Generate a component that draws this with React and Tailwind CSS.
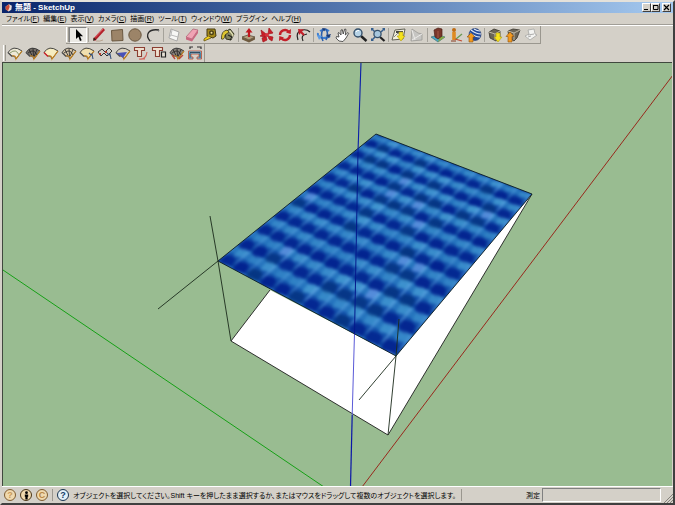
import React, { useState } from 'react';

const Icon = ({ children, size = 'size-4' }) => (
  <svg viewBox="0 0 16 16" className={`${size} shrink-0`} fill="none" aria-hidden="true">
    {children}
  </svg>
);

/* ---------- main toolbar icons ---------- */

const SelectIcon = () => (
  <Icon><path d="M6 2v10l2.4-2.2L10 14l1.7-.8L10 9.2h3z" fill="#000" /></Icon>
);
const PencilIcon = () => (
  <Icon>
    <path d="M3 13 13 2" stroke="#b3202a" strokeWidth="2.8" />
    <path d="M4.2 10.4 12 2" stroke="#e8747a" strokeWidth=".8" />
    <path d="m2 14 .8-3.4 2.4 2z" fill="#332418" />
    <path d="M5 14q4 .6 7-1" stroke="#b9a38f" />
  </Icon>
);
const RectIcon = () => (
  <Icon><path d="m2.5 3.5 11-1 .5 11-11 .5z" fill="#9c8468" stroke="#6b5840" /></Icon>
);
const CircleIcon = () => (
  <Icon><circle cx="8" cy="8" r="6.2" fill="#9c8468" stroke="#6b5840" /></Icon>
);
const ArcIcon = () => (
  <Icon>
    <path d="M5 14C0 8 3 1.500 14 3" stroke="#2b2b2b" strokeWidth="1.300" />
    <path d="m5 14 1.500-.5M14 3l-.5 1.500" stroke="#777" />
  </Icon>
);
const ComponentIcon = () => (
  <Icon>
    <path d="m5 2 8 3-2 9-8-3z" fill="#f7f7f5" stroke="#999" strokeWidth=".8" />
    <path d="m3 11 2-3 7 2M5 8l1-5" stroke="#bbb" />
  </Icon>
);
const EraserIcon = () => (
  <Icon>
    <path d="m2 10 7-8 5 1-6 9z" fill="#f0a3b4" stroke="#a95f70" strokeWidth=".7" />
    <path d="m2 10 6 2v2.500l-6-2zM8 12l6-9v3l-6 8.500z" fill="#c9667f" />
  </Icon>
);
const TapeIcon = () => (
  <Icon>
    <path d="M5 2h8l1 7-3 2-6-2z" fill="#a58b1c" stroke="#463a10" />
    <circle cx="9.500" cy="5.800" r="2.500" fill="#4e4216" />
    <circle cx="9.500" cy="5.800" r="1" fill="#efe196" />
    <path d="m6 9-4 3v2l7-3" fill="#f0d01c" stroke="#63530f" strokeWidth=".8" />
  </Icon>
);
const PaintIcon = () => (
  <Icon>
    <path d="m5 5 5-3 4 5-3 6-5-1z" fill="#83845e" stroke="#33331f" />
    <path d="m7 5 3-1 3 4-2 4" stroke="#e3e0b4" strokeWidth="1.300" />
    <path d="M7 3Q1 4 1.500 12q3 1 3.500-4l4-3z" fill="#dfc730" stroke="#3b3618" strokeWidth=".8" />
    <path d="m8 8 4 2-2 3" stroke="#222" strokeWidth="1.200" />
  </Icon>
);
const PushIcon = () => (
  <Icon>
    <path d="m1 10 6-2 7 2-6 3z" fill="#b5a07e" stroke="#4c3f2e" strokeWidth=".7" />
    <path d="M1 10v2.500l7 3v-2.500zM8 13l6-3v2.500l-6 3z" fill="#6f5b40" />
    <path d="M8 10V4" stroke="#c0171f" strokeWidth="2.200" />
    <path d="M8 1 4.500 5.500h7z" fill="#c0171f" />
  </Icon>
);
const MoveIcon = () => (
  <Icon>
    <path d="m7 7-5-4 1 5-2 1 5 1zM9 7l1-6 4 5-2 .5zM9 9l5 1-1 4-3-2zM7 9l1 4-4 2-1-4z" fill="#c91f28" stroke="#a3151c" strokeWidth=".7" />
    <circle cx="8" cy="8" r="2" fill="#d5343c" />
  </Icon>
);
const RotateIcon = () => (
  <Icon>
    <path d="M3 8a5 5 0 0 1 8.500-3.500M13 8a5 5 0 0 1-8.500 3.500" stroke="#c3202a" strokeWidth="2.400" />
    <path d="m14 2-.3 5-4.700-1.500zM2 14l.3-5L7 10.500z" fill="#c3202a" />
  </Icon>
);
const OffsetIcon = () => (
  <Icon>
    <path d="M3 13Q0 5 7 3q5-1 8 2" stroke="#222" strokeWidth="1.200" />
    <path d="M8 14Q5 8 12 7" stroke="#222" strokeWidth="1.200" />
    <path d="m9 8-3-3" stroke="#c3202a" strokeWidth="2.200" />
    <path d="m3 2 6 .5L4 8z" fill="#c3202a" />
  </Icon>
);
const OrbitIcon = () => (
  <Icon>
    <path d="M2 6q-1 4 5 5 5 0 7-2M4 4q5-3 9 0" stroke="#3f7fd0" strokeWidth="2" />
    <path d="M7 2q-3 6 0 12M10 2q3 5 0 11" stroke="#2a5fae" strokeWidth="1.600" />
    <path d="m6 1 4 .5-2 3zM15 7l-2 4-3-3z" fill="#1d3b74" />
    <path d="m1 8 5 1-3 4z" fill="#5b9be6" />
  </Icon>
);
const HandIcon = () => (
  <Icon>
    <path d="m5 14-3-3 .5-1.500L5 10 4 6l1-.5L7 8l0-5 1.300-.3L9.200 7l1.600-5 1.200.4L11.300 8 14 5.500l.7.8L12 11l-3 3.500z" fill="#fff" stroke="#333" strokeWidth=".8" />
  </Icon>
);
const ZoomIcon = () => (
  <Icon>
    <path d="m9 9 5.500 5" stroke="#222" strokeWidth="2.400" />
    <circle cx="6" cy="6" r="4" fill="#b7d3e6" stroke="#35506a" strokeWidth="1.400" />
    <path d="M4 5q1-2 3-1.500" stroke="#fff" />
  </Icon>
);
const ZoomExtentsIcon = () => (
  <Icon>
    <path d="m2 2 3 3M14 2l-3 3M2 13l3-3" stroke="#365f8f" strokeWidth="1.500" />
    <path d="m10 10 4.500 4" stroke="#222" strokeWidth="2.200" />
    <path d="M1 1h3L1 4zM15 1h-3l3 3zM1 14h3l-3-3z" fill="#365f8f" />
    <circle cx="7.500" cy="7" r="3.600" fill="#a7c7de" stroke="#35506a" strokeWidth="1.300" />
  </Icon>
);
const GetViewIcon = () => (
  <Icon>
    <path d="m4 3 10-1-2 10-11 1z" fill="#f2f0dc" stroke="#55554a" strokeWidth=".9" />
    <path d="M5 4h7v2H5z" fill="#444" />
    <path d="m3 10 4-4 3 2" stroke="#888" />
    <path d="M8 5h4v4h2l-4 5-4-5h2z" fill="#f6e21b" stroke="#b09d14" strokeWidth=".6" />
  </Icon>
);
const TerrainIcon = () => (
  <Icon>
    <path d="m3 2 6 4 4 1v6l-11 1z" fill="#c6c5c2" stroke="#9a9996" strokeWidth=".8" />
    <path d="m3 13 10-6M3 3l3 10" stroke="#ecebe9" />
  </Icon>
);
const ModelIcon = () => (
  <Icon>
    <path d="m1 10 7-2 7 2-7 5z" fill="#49a7c5" stroke="#376764" strokeWidth=".6" />
    <path d="m8 15 7-5-5-1z" fill="#88a844" />
    <path d="m4 3 4-2 4 1v7l-4 3-3-2z" fill="#79372a" stroke="#4c2018" strokeWidth=".7" />
    <path d="M8 4v7" stroke="#a65a46" />
  </Icon>
);
const FigureIcon = () => (
  <Icon>
    <path d="M6 13V5" stroke="#df8a21" strokeWidth="3.600" />
    <circle cx="6" cy="3" r="2" fill="#c06c14" />
    <path d="m8 12 6-5" stroke="#6a9a52" strokeWidth="1.300" />
    <path d="m7 12 7 2" stroke="#c04a30" strokeWidth="1.200" />
    <path d="M3 14h5" stroke="#883b20" />
  </Icon>
);
const EarthIcon = () => (
  <Icon>
    <circle cx="9" cy="7.500" r="6" fill="#244b9c" stroke="#182f64" strokeWidth=".6" />
    <path d="M5 3q5 4 10 4M4 6q5 4 10 4M8 2q3 2 6 2" stroke="#e3ecf8" strokeWidth="1.200" />
    <path d="m5 6 4 4H7v5H3v-5H1z" fill="#f39a20" stroke="#8b5210" strokeWidth=".6" />
  </Icon>
);
const GetModelsIcon = () => (
  <Icon>
    <path d="m2 5 5-3 6 2v7l-4 3-6-3z" fill="#6b6557" stroke="#3a362e" strokeWidth=".8" />
    <path d="m2 5 6 2 5-3M8 7v6" stroke="#c0b8a4" />
    <path d="M9 6h4v4h2l-4 5-4-5h2z" fill="#f6e21b" stroke="#b09d14" strokeWidth=".6" />
  </Icon>
);
const ShareModelIcon = () => (
  <Icon>
    <path d="m3 4 5-2 7 1-3 8-3 3-5-3z" fill="#6b6557" stroke="#3a362e" strokeWidth=".8" />
    <path d="m3 4 6 2 6-3M9 6v7" stroke="#c0b8a4" />
    <path d="m5 5 4 4.500H7V15H3V9.500H1z" fill="#f39a20" stroke="#8b5210" strokeWidth=".6" />
  </Icon>
);
const LayoutIcon = () => (
  <Icon>
    <path d="m5 3 6-1 1 5 2 1-7 5-5-4 4-2z" fill="#f3f3f1" stroke="#a6a6a3" strokeWidth=".8" />
    <path d="m5 8 6-1M5 10l3-1" stroke="#999" strokeWidth=".8" />
  </Icon>
);

/* ---------- curve plugin icons ---------- */

const Fan = ({ fill = '#eee9d6', left = '#555', children }) => (
  <Icon>
    <path d="M1 7.500Q6-.5 15 6L9 14Q8 10 5 11z" fill={fill} stroke="#333" strokeWidth=".9" />
    <path d="m1 7.500 4 4" stroke={left} strokeWidth="1.300" />
    <path d="M5 11q4-1 4 3l6-8" stroke="#c9861f" strokeWidth="1.100" />
    {children}
  </Icon>
);
const Mesh = () => (
  <path d="m4 4.500 3 6M8 3.500l.5 7.500M12 4.500l-3 7M3 8q6-5 9 2" stroke="#222" strokeWidth=".8" />
);
const Squiggle = () => (
  <path d="m10 8 2 2 1-1 1 5" stroke="#35507b" strokeWidth="1.100" />
);
const TeeIcon = ({ square }) => (
  <Icon>
    <path d="M1.500 2.500h10v3h-3v6h-4v-6h-3z" fill="#efe0cf" stroke="#8b3e32" strokeWidth="1.100" />
    {square
      ? <path d="M10.500 7h4v5h-4z" fill="#e8e2d6" stroke="#222" strokeWidth="1.200" />
      : <path d="M6 14q7 1 8-7M8 14h4" stroke="#d3635a" strokeWidth="1.100" />}
  </Icon>
);
const FrameIcon = () => (
  <Icon>
    <path d="M3 4V2h3M10 2h4v2" stroke="#333" strokeWidth="1.200" />
    <path d="M1.500 6h13v8H10v-2h2V9H4v3h2v2H1.500z" fill="#63c0e6" stroke="#c04a30" strokeWidth=".8" />
    <path d="M3 13V7.500h10V13" stroke="#234" strokeWidth=".8" />
  </Icon>
);

const toolGroups = [
  [['選択', SelectIcon]],
  [['線', PencilIcon], ['長方形', RectIcon], ['円', CircleIcon], ['円弧', ArcIcon]],
  [['コンポーネント', ComponentIcon], ['消しゴム', EraserIcon], ['メジャー', TapeIcon], ['ペイント', PaintIcon]],
  [['プッシュ/プル', PushIcon], ['移動', MoveIcon], ['回転', RotateIcon], ['オフセット', OffsetIcon]],
  [['オービット', OrbitIcon], ['パン表示', HandIcon], ['ズーム', ZoomIcon], ['全体表示', ZoomExtentsIcon]],
  [['現在のビューを取得', GetViewIcon], ['地形を切り替え', TerrainIcon]],
  [['モデルを配置', ModelIcon], ['人物', FigureIcon], ['Google Earth', EarthIcon]],
  [['モデルを取得', GetModelsIcon], ['モデルを共有', ShareModelIcon], ['LayOut', LayoutIcon]],
];

const pluginTools = [
  ['曲面 1', () => <Fan><path d="M3 8q6-5 9 2" stroke="#8a9a6a" /></Fan>],
  ['曲面 2', () => <Fan fill="#77716a"><Mesh /></Fan>],
  ['曲面 3', () => <Fan fill="#f6ecc0" left="#d3202a" />],
  ['曲面 4', () => <Fan fill="#d8c8ad"><Mesh /></Fan>],
  ['曲面 5', () => <Fan fill="#f0dfae"><Squiggle /></Fan>],
  ['曲面 6', () => <Icon><path d="m1 7 4-3 3 3 4-4 3 3-5 5-3-3-3 3z" stroke="#333" /><path d="M2 8h2v2H2zM8 6h2v2H8z" fill="#b83b2c" /><Squiggle /></Icon>],
  ['曲面 7', () => <Fan fill="#d8d0bd"><path d="m2 8 10-1-4 6z" fill="#4751b8" /></Fan>],
  ['ツール 8', () => <TeeIcon />],
  ['ツール 9', () => <TeeIcon square />],
  ['曲面 10', () => <Fan fill="#88827b"><Mesh /><path d="m3 10 3 4M10 14l4-4" stroke="#b8473a" strokeWidth="1.300" /></Fan>],
  ['ツール 11', FrameIcon],
];

const menus = [
  ['ファイル', 'F'], ['編集', 'E'], ['表示', 'V'], ['カメラ', 'C'], ['描画', 'R'],
  ['ツール', 'T'], ['ウィンドウ', 'W'], ['プラグイン', ''], ['ヘルプ', 'H'],
];

/* ---------- roof texture ---------- */

// roof corners: back left, back right, front right, front left
const roof = [[376, 134], [532, 194], [396, 356], [218, 261]];
const COLS = 12;
const ROWS = 10;

// perspective mapping of the unit square onto the roof
const makeProjection = ([[x0, y0], [x1, y1], [x2, y2], [x3, y3]]) => {
  const dx1 = x1 - x2, dx2 = x3 - x2, sx = x0 - x1 + x2 - x3;
  const dy1 = y1 - y2, dy2 = y3 - y2, sy = y0 - y1 + y2 - y3;
  const det = dx1 * dy2 - dx2 * dy1;
  const g = (sx * dy2 - dx2 * sy) / det;
  const h = (dx1 * sy - sx * dy1) / det;
  return (u, v) => {
    const w = g * u + h * v + 1;
    const x = ((x1 - x0 + g * x1) * u + (x3 - x0 + h * x3) * v + x0) / w;
    const y = ((y1 - y0 + g * y1) * u + (y3 - y0 + h * y3) * v + y0) / w;
    return `${x.toFixed(1)},${y.toFixed(1)}`;
  };
};
const project = makeProjection(roof);
const shape = (c, r, pts) => pts.map(([a, b]) => project((c + a) / COLS, (r + b) / ROWS)).join(' ');
const noise = (c, r) => Math.abs(Math.sin(c * 12.9 + r * 78.2) * 43758.5) % 1;

const darkTile = [[0, 0.6], [0.45, 0.5], [0.75, 0.6], [0.9, 0.95], [0.5, 1.1], [0.1, 1]];
const lightTile = [[0.3, 0.05], [0.7, -0.05], [0.95, 0.1], [0.85, 0.4], [0.4, 0.5]];
const streak = [[0.85, 0], [1.02, 0], [1.02, 0.7], [0.92, 0.8]];

const RoofTexture = () => {
  const tiles = [];
  for (let r = -1; r <= ROWS; r++) {
    for (let c = -1; c <= COLS; c++) {
      const n = noise(c, r);
      tiles.push(
        <g key={`${r}:${c}`}>
          <polygon points={shape(c, r, lightTile)} fill={n > 0.85 ? '#5f92e0' : '#4aa0d6'} opacity={0.25 + n * 0.6} />
          <polygon points={shape(c, r, darkTile)} fill={n > 0.6 ? '#033078' : '#02208e'} opacity={0.9 - n * 0.35} />
          <polygon points={shape(c, r, streak)} fill="#6cb0ea" opacity={0.35 + n * 0.4} />
        </g>
      );
    }
  }
  return (
    <g clipPath="url(#roof-clip)">
      <polygon points={roof.join(' ')} fill="#1250aa" />
      <g filter="url(#roof-soft)">
        {Array.from({ length: ROWS + 1 }, (_, r) => (
          <g key={r}>
            <polygon points={shape(0, r, [[0, -0.05], [COLS, -0.05], [COLS, 0.4], [0, 0.4]])} fill="#2c80c4" opacity=".75" />
            <polygon points={shape(0, r, [[0, 0.6], [COLS, 0.6], [COLS, 0.95], [0, 0.95]])} fill="#0a3c98" opacity=".7" />
          </g>
        ))}
        {tiles}
      </g>
    </g>
  );
};

const Scene = () => (
  <svg viewBox="3 63 669 423" preserveAspectRatio="xMidYMid slice" className="absolute inset-0 size-full" role="img" aria-label="モデル">
    <defs>
      <clipPath id="roof-clip"><polygon points={roof.join(' ')} /></clipPath>
      <filter id="roof-soft" x="-5%" y="-5%" width="110%" height="110%" colorInterpolationFilters="sRGB">
        <feGaussianBlur stdDeviation="1.700" />
      </filter>
    </defs>
    <path d="M3 270 324 487" stroke="#16a016" />
    <path d="M673 75 362 487" stroke="#98281c" />
    <path d="m350.500 487 1.700-72" stroke="#0a14a8" strokeWidth="1.200" />
    <path d="m231 341 39-51 126 66 136-162-144 241z" fill="#fff" />
    <path d="m270 290-39 51 157 94 144-241" stroke="#1d1d1d" strokeWidth=".9" fill="none" />
    <path d="m354.500 333-2.300 82" stroke="#5a5ad8" />
    <RoofTexture />
    <polygon points={roof.join(' ')} fill="none" stroke="#0b1c26" strokeWidth=".9" />
    <path d="m361 62-3 90" stroke="#0a1ea8" strokeWidth="1.100" />
    <path d="m358 152-3.500 182" stroke="#04188c" />
    <path d="m210 216 8 45 13 80M218 261l-60 48M399 319l-3 37-8 79M396 356l-37 44" stroke="#1b2a1b" strokeWidth=".9" fill="none" />
  </svg>
);

/* ---------- window chrome ---------- */

const Grip = () => (
  <span className="flex gap-px self-stretch py-px">
    <span className="w-px bg-white" />
    <span className="w-px bg-[#9a978f]" />
  </span>
);

const Divider = () => <span className="mx-px h-3.5 w-px shrink-0 bg-[#a5a29a]" />;

const ToolButton = ({ label, active, onClick, children }) => (
  <button
    type="button"
    aria-label={label}
    onClick={onClick}
    className={`flex h-4 w-[18px] shrink-0 items-center justify-center ${active ? 'border border-t-[#808080] border-l-[#808080] border-r-white border-b-white bg-[#ebe9e4]' : ''}`}
  >
    {children}
  </button>
);

const WindowButton = ({ label, children }) => (
  <button type="button" aria-label={label} className="flex h-[9px] w-[9px] items-center justify-center border border-t-white border-l-white border-r-[#404040] border-b-[#404040] bg-[#d4d0c8]">
    <svg viewBox="0 0 7 7" className="size-[7px] shrink-0" fill="none" stroke="#000">{children}</svg>
  </button>
);

const Badge = ({ children, className }) => (
  <span className={`flex size-3 items-center justify-center rounded-full border text-[9px] leading-none font-bold ${className}`}>
    {children}
  </span>
);

const App = () => {
  const [tool, setTool] = useState('選択');
  const [measure, setMeasure] = useState('');

  return (
    <div className="flex h-screen flex-col overflow-hidden border-2 border-t-[#e4e1da] border-l-[#d4d0c8] border-r-[#404040] border-b-[#404040] bg-[#d4d0c8] font-['Liberation_Sans','Noto_Sans_CJK_JP',sans-serif] text-[7px] leading-none text-black [font-feature-settings:'palt']">
      {/* Title bar */}
      <header className="flex h-[11px] shrink-0 items-center justify-between bg-linear-to-r from-[#0a246a] to-[#a6caf0] px-0.5">
        <div className="flex items-center gap-0.5">
          <Icon size="size-[9px]">
            <path d="m3 6 6-4 5 3-1 7-5 3-5-4z" fill="#e8ded8" />
            <path d="m3 6 6-4 1 5-3 7-4-3z" fill="#cc4b35" />
          </Icon>
          <h1 className="text-[8px] font-bold text-white">無題 - SketchUp</h1>
        </div>
        <div className="flex">
          <WindowButton label="最小化"><path d="M1 5.500h4" /></WindowButton>
          <WindowButton label="最大化"><path d="M1 1.500h5v4H1.500v-4" /></WindowButton>
          <span className="w-0.5" />
          <WindowButton label="閉じる"><path d="m1 1 5 5M6 1 1 6" strokeWidth="1.200" /></WindowButton>
        </div>
      </header>

      {/* Menu */}
      <nav className="flex h-3 shrink-0 items-center gap-1 border-b border-b-[#a19e97] px-1">
        {menus.map(([name, key]) => (
          <button key={name} type="button" className="whitespace-nowrap">
            {name}{key && <>(<u>{key}</u>)</>}
          </button>
        ))}
      </nav>

      {/* Main toolbar */}
      <div className="flex h-[19px] shrink-0 border-t border-t-white pl-16">
        <div className="flex items-center border-r border-b border-r-[#9a978f] border-b-[#9a978f]">
          <Grip />
          {toolGroups.map((group, i) => (
            <React.Fragment key={i}>
              {i > 0 && <Divider />}
              {group.map(([label, Glyph]) => (
                <ToolButton key={label} label={label} active={tool === label} onClick={() => setTool(label)}>
                  <Glyph />
                </ToolButton>
              ))}
            </React.Fragment>
          ))}
        </div>
      </div>

      {/* Plugin toolbar */}
      <div className="flex h-[18px] shrink-0 pl-px">
        <div className="flex items-center border-r border-r-[#9a978f]">
          <Grip />
          {pluginTools.map(([label, Glyph]) => (
            <ToolButton key={label} label={label} active={tool === label} onClick={() => setTool(label)}>
              <Glyph />
            </ToolButton>
          ))}
        </div>
      </div>

      {/* Viewport */}
      <main className="relative mr-px min-h-0 flex-1 border-t border-l border-t-[#40483e] border-l-[#40483e] bg-[#99bc91]">
        <Scene />
      </main>

      {/* Status bar */}
      <footer className="flex h-[17px] shrink-0 items-center border-t border-t-white pl-0.5">
        <div className="flex gap-1">
          <Badge className="border-[#7d5b30] bg-[#f0d9ae] text-[#c89a5c]">?</Badge>
          <Badge className="border-[#4c3718] bg-[#f0d9ae] text-black">
            <Icon size="size-[9px]"><circle cx="8" cy="3" r="2.500" fill="#000" /><path d="M5 6h6v4h-1v5H6v-5H5z" fill="#000" /></Icon>
          </Badge>
          <Badge className="border-[#7d5b30] bg-[#f0d9ae] text-[#b98846]">C</Badge>
        </div>
        <span className="ml-1 h-3 w-px bg-[#9a978f]" />
        <Badge className="ml-1 border-[#17334f] bg-[#e3f0f8] text-[#143c66]">?</Badge>
        <p className="ml-1 min-w-0 flex-1 whitespace-nowrap">
          オブジェクトを選択してください。Shift キーを押したまま選択するか、またはマウスをドラッグして複数のオブジェクトを選択します。
        </p>
        <span className="mr-16 h-3 w-px bg-[#9a978f]" />
        <label htmlFor="measure" className="mr-0.5">測定</label>
        <input
          id="measure"
          value={measure}
          onChange={(e) => setMeasure(e.target.value)}
          className="h-3.5 w-[119px] border border-t-[#808080] border-l-[#808080] border-r-white border-b-white bg-[#d4d0c8] px-1 outline-none"
        />
        <svg viewBox="0 0 10 10" className="ml-0.5 size-2.5 self-end" stroke="#85827b" aria-hidden="true">
          <path d="m1 10 9-9M4 10l6-6M7 10l3-3" />
        </svg>
      </footer>
    </div>
  );
};

export default App;
